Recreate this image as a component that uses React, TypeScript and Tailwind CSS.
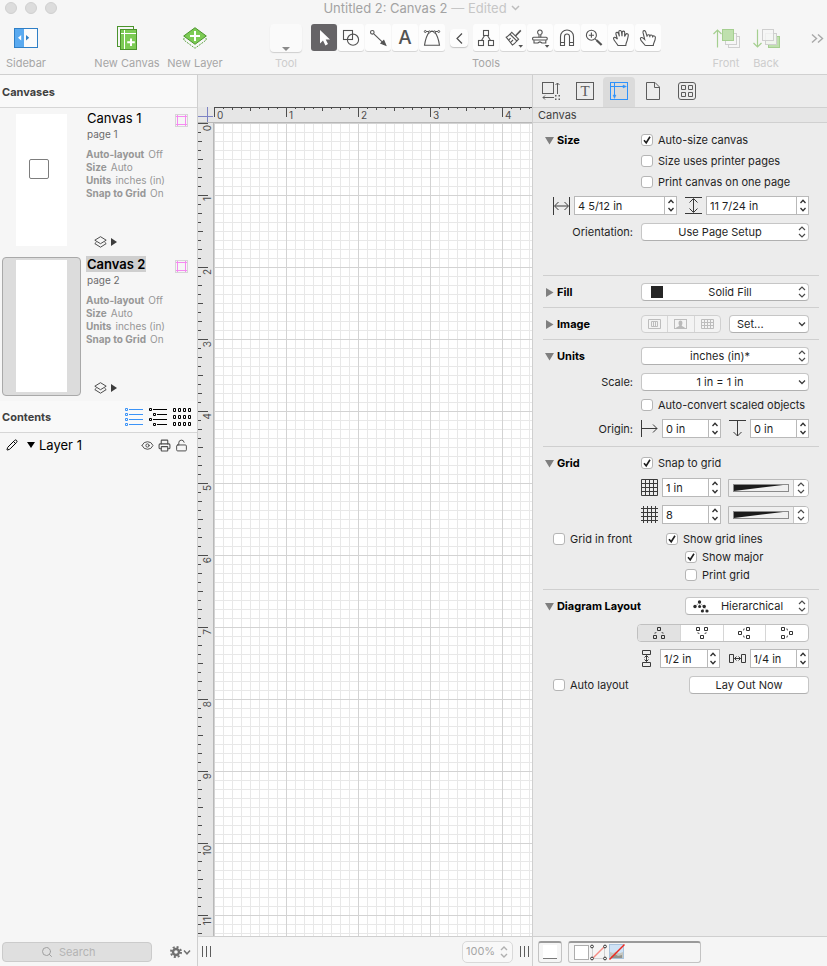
import { useEffect, useRef, useState, type ReactNode } from "react";
import { Search, Pencil, Eye, Printer, LockOpen } from "lucide-react";
import clsx from "clsx";

const INCH = 72;
const STEP = 9;

// Rulers only draw the ticks and numbers that fit in the visible length
function useSize() {
  const ref = useRef<HTMLDivElement>(null);
  const [size, setSize] = useState({ width: 0, height: 0 });

  useEffect(() => {
    const el = ref.current;
    if (!el) return;
    const measure = () => setSize({ width: el.clientWidth, height: el.clientHeight });
    measure();
    const observer = new ResizeObserver(measure);
    observer.observe(el);
    return () => observer.disconnect();
  }, []);

  return { ref, ...size };
}

function range(n: number) {
  return Array.from({ length: Math.max(0, n) }, (_, i) => i);
}

function tickLength(i: number, major: number) {
  if (i % 8 === 0) return major;
  if (i % 4 === 0) return 4;
  if (i % 2 === 0) return 3;
  return 2;
}

function HorizontalRuler() {
  const { ref, width } = useSize();

  return (
    <div ref={ref} className="min-w-0 flex-1">
      <svg className="block h-full w-full" aria-label="Horizontal ruler">
        <rect x="0" y="0" width="100%" height="1" fill="#4d4d4d" />
        {range(Math.ceil(width / STEP)).map((i) => (
          <rect key={i} x={i * STEP} y="0" width="1" height={tickLength(i, 10)} fill="#4d4d4d" />
        ))}
        {range(Math.ceil((width - 16) / INCH)).map((i) => (
          <text key={i} x={i * INCH + 3} y="12" fontSize="10" fill="#4d4d4d">
            {i}
          </text>
        ))}
      </svg>
    </div>
  );
}

function VerticalRuler() {
  const { ref, height } = useSize();

  return (
    <div ref={ref} className="w-4 shrink-0 border-r border-[#b8b8b8] bg-[#e6e6e6]">
      <svg className="block h-full w-full" aria-label="Vertical ruler">
        {range(Math.ceil(height / STEP)).map((i) => (
          <rect key={i} x="0" y={i * STEP} width={tickLength(i, 9) + 1} height="1" fill="#4d4d4d" />
        ))}
        {range(Math.ceil((height - 16) / INCH)).map((i) => (
          <text
            key={i}
            transform={`translate(13 ${i * INCH + 2}) rotate(-90)`}
            textAnchor="end"
            fontSize="10"
            fill="#4d4d4d"
          >
            {i}
          </text>
        ))}
      </svg>
    </div>
  );
}

function CanvasGrid() {
  return (
    <svg className="block h-full w-full bg-white" aria-label="Canvas 2 drawing area">
      <defs>
        <pattern id="minor" width={STEP} height={STEP} patternUnits="userSpaceOnUse">
          <path d="M0 0h9v1h-8v8h-1z" fill="#e8e8e8" />
        </pattern>
        <pattern id="major" width={INCH} height={INCH} patternUnits="userSpaceOnUse">
          <path d="M0 0h72v1h-71v71h-1z" fill="#d3d3d3" />
        </pattern>
      </defs>
      <rect width="100%" height="100%" fill="url(#minor)" />
      <rect width="100%" height="100%" fill="url(#major)" />
    </svg>
  );
}

/* ---------- Toolbar ---------- */

function ToolIcon({ children }: { children: ReactNode }) {
  return (
    <svg viewBox="0 0 26 27" className="h-[27px] w-[26px]" fill="none" stroke="#535353" strokeWidth="1.1">
      {children}
    </svg>
  );
}

const TOOLS_LEFT: { name: string; icon: ReactNode }[] = [
  {
    name: "Selection",
    icon: (
      <ToolIcon>
        <path d="M9 6V19.5L12 16.6L14.4 21.4L17 20.1L14.7 15.5H19Z" fill="#fff" stroke="none" />
      </ToolIcon>
    ),
  },
  {
    name: "Shape",
    icon: (
      <ToolIcon>
        <rect x="5.5" y="6.5" width="9" height="9" />
        <circle cx="15" cy="15.7" r="5.6" />
      </ToolIcon>
    ),
  },
  {
    name: "Line",
    icon: (
      <ToolIcon>
        <circle cx="7.3" cy="8.3" r="1.8" />
        <path d="M8.8 9.8L18 18.6" />
        <path d="M20.8 21.2L18.8 16.4L15.9 19.3Z" fill="#535353" />
      </ToolIcon>
    ),
  },
  {
    name: "Text",
    icon: <span className="text-[19px] leading-[27px] font-medium text-[#535353]">A</span>,
  },
  {
    name: "Pen",
    icon: (
      <ToolIcon>
        <path d="M6 7.5H20M10.2 8.2C8 11 6.3 16 5.5 21.3H20.5C19.7 16 18 11 15.8 8.2" />
        <path d="M10 8.5C11.5 6.5 14.5 6.5 16 8.5" />
        <g fill="#fff" strokeWidth="1">
          <circle cx="6.3" cy="7.5" r="1" />
          <circle cx="19.7" cy="7.5" r="1" />
          <circle cx="10.4" cy="7.9" r="1" />
          <circle cx="15.6" cy="7.9" r="1" />
        </g>
      </ToolIcon>
    ),
  },
];

const TOOLS_RIGHT: { name: string; icon: ReactNode }[] = [
  {
    name: "Diagram",
    icon: (
      <ToolIcon>
        <rect x="10.5" y="6.5" width="5" height="5" />
        <rect x="5.5" y="16.5" width="5" height="5" />
        <rect x="15.5" y="16.5" width="5" height="5" />
        <path d="M11.5 11.5L8.5 16.5M14.5 11.5L17.5 16.5" />
      </ToolIcon>
    ),
  },
  {
    name: "Style Brush",
    icon: (
      <ToolIcon>
        <path d="M11.8 8.4L18.6 15.2L16.8 17L10 10.2Z" />
        <path d="M10 10.2C8.8 11.6 7.6 12.6 6.2 13.2L12.4 21C14 20 15.6 18.6 16.8 17" />
        <path d="M8.6 16.2L10.6 14.2M10.4 18.6L13 16" />
        <path d="M15.4 12L20.8 6.4" strokeWidth="1.6" />
        <path d="M18.4 21H23L20.7 23.8Z" fill="#535353" stroke="none" />
      </ToolIcon>
    ),
  },
  {
    name: "Rubber Stamp",
    icon: (
      <ToolIcon>
        <path d="M12 13.2V10.4A2.3 2.3 0 1 1 13.8 10.4V13.2" />
        <rect x="5.6" y="13.2" width="14.6" height="2.8" rx="1" />
        <path d="M7 16.2V19H10.5C11.4 19 11.8 17.9 12.9 17.9S14.4 19 15.3 19H18.8V16.2" />
        <path d="M17.8 21H22.4L20.1 23.8Z" fill="#535353" stroke="none" />
      </ToolIcon>
    ),
  },
  {
    name: "Magnet",
    icon: (
      <ToolIcon>
        <path d="M6.5 21.5V12.5A6.5 6.5 0 0 1 19.5 12.5V21.5H15.5V12.5A2.5 2.5 0 0 0 10.5 12.5V21.5Z" />
        <path d="M6.5 18.5H10.5M15.5 18.5H19.5" />
      </ToolIcon>
    ),
  },
  {
    name: "Zoom",
    icon: (
      <ToolIcon>
        <circle cx="10.4" cy="11.2" r="5" />
        <path d="M10.4 8.6V13.8M7.8 11.2H13" />
        <path d="M14.2 15L16 16.6" />
        <path d="M15.6 16.2L20.6 21" strokeWidth="2.2" />
      </ToolIcon>
    ),
  },
  {
    name: "Hand",
    icon: (
      <ToolIcon>
        <path d="M10 21.5C9.2 19.6 5.5 16.4 5.5 14.4C5.5 13.1 7.2 13 8.2 14L9.4 15.2L7.9 10C7.5 8.2 9.8 7.7 10.4 9.3L11.4 12.4L10.8 8C10.7 6.2 13.2 6 13.5 7.8L14 12.2L14.2 8.2C14.4 6.6 16.8 6.8 16.7 8.6L16.6 12.6L17.7 10.4C18.4 9 20.6 9.7 20.3 11.4C19.9 13.6 19.6 15 19.2 16.4C18.7 18.2 17.8 19.4 17.8 21.5Z" />
      </ToolIcon>
    ),
  },
  {
    name: "Browse",
    icon: (
      <ToolIcon>
        <path d="M10.2 21.5C9.2 19.4 5.4 17 5.4 14.7C5.4 13.3 7.1 13.1 8.1 14.1L9.7 15.5L8 8.4C7.7 6.4 10.1 5.9 10.7 7.8L12 12.2V12.8M12 12.2C12.2 10.4 14.4 10.3 14.8 11.8V13.2M14.8 12C15.2 10.6 17.3 10.8 17.6 12.3V13.6M17.6 12.6C18.2 11.4 20.4 11.8 20.4 13.5C20.4 17.2 18.3 18.6 18.3 21.5H10.2" />
      </ToolIcon>
    ),
  },
];

function ToolButton({ name, active, onClick, children }: {
  name: string;
  active: boolean;
  onClick: () => void;
  children: ReactNode;
}) {
  return (
    <button
      aria-label={name}
      onClick={onClick}
      className={clsx(
        "flex h-[27px] w-[26px] items-center justify-center rounded-[3px]",
        active ? "bg-[#666467]" : "bg-[#fdfdfd] shadow-[0_1px_0_#d6d6d6]"
      )}
    >
      {children}
    </button>
  );
}

function ToolbarItem({ label, className, children }: { label: string; className: string; children: ReactNode }) {
  return (
    <button className={clsx("flex flex-col items-center whitespace-nowrap", className)}>
      <span className="flex h-7 items-center justify-center">{children}</span>
      <span className="mt-1 text-[11px] leading-[14px]">{label}</span>
    </button>
  );
}

function Toolbar() {
  const [tool, setTool] = useState("Selection");

  return (
    <header className="border-b border-[#d0d0d0] bg-[#f6f6f6] pb-1">
      <div className="flex h-4 items-center">
        <div className="flex gap-2 pl-[5px]">
          {["Close", "Minimize", "Zoom window"].map((n) => (
            <button key={n} aria-label={n} className="size-3 rounded-full border border-[#d0d0d0] bg-[#dcdcdc]" />
          ))}
        </div>
        <h1 className="flex flex-1 items-center justify-center gap-1 pr-[41px] text-[13px] leading-4 text-[#a3a3a3]">
          Untitled 2: Canvas 2 <span className="text-[#c6c6c6]">— Edited</span>
          <svg viewBox="0 0 9 6" className="h-[6px] w-[9px]" fill="none" stroke="#bdbdbd" strokeWidth="1.5">
            <path d="M1 1L4.5 4.5L8 1" />
          </svg>
        </h1>
      </div>

      <div className="flex items-start pt-2 text-[#a6a6a6]">
        <ToolbarItem label="Sidebar" className="mr-[41px] w-[52px]">
          <svg viewBox="0 0 24 20" className="h-5 w-6">
            <rect x="0.5" y="0.5" width="23" height="19" fill="#fbfbfb" stroke="#2f7fc6" />
            <rect x="1" y="1" width="9" height="18" fill="#5aaaf0" />
            <path d="M7.2 7V12.5L4 9.8Z" fill="#fff" />
            <path d="M12 7V12.5L15.2 9.8Z" fill="#2f7fc6" />
          </svg>
        </ToolbarItem>
        <ToolbarItem label="New Canvas" className="w-[68px]">
          <svg viewBox="0 0 20 24" className="h-6 w-5">
            <rect x="0.5" y="0.5" width="16" height="20" fill="#f6f6f6" stroke="#4b942c" />
            <rect x="3.5" y="3.5" width="16" height="20" fill="#7ccb54" stroke="#4b942c" />
            <path d="M7.5 4V23M4 7.5H19" stroke="#fff" />
            <path d="M14 12.5V20M10.2 16.2H17.8" stroke="#fff" strokeWidth="2" />
          </svg>
        </ToolbarItem>
        <ToolbarItem label="New Layer" className="w-[68px]">
          <svg viewBox="0 0 24 22" className="h-[22px] w-6">
            <path d="M1 11L0.8 13L12 21.3L23.2 13L23 11" fill="#f6f6f6" stroke="#5fa544" strokeDasharray="2 1" />
            <path d="M12 0.7L23.3 9L12 17.3L0.7 9Z" fill="#7ccb54" stroke="#4b942c" />
            <path d="M12 4V14M7 9H17" stroke="#fff" strokeWidth="2" />
          </svg>
        </ToolbarItem>

        <button className="ml-[41px] flex w-8 flex-col items-center">
          <span className="flex h-7 w-8 items-end justify-center rounded-[4px] bg-[#fafafa] shadow-[0_1px_1px_#cfcfcf]">
            <svg viewBox="0 0 8 4" className="mb-px h-1 w-2">
              <path d="M0 0H8L4 4Z" fill="#8a8a8a" />
            </svg>
          </span>
          <span className="mt-1 text-[11px] leading-[14px] text-[#cdcdcd]">Tool</span>
        </button>

        <div className="ml-[9px] flex flex-col items-center">
          <div className="flex h-7 gap-px">
            {TOOLS_LEFT.map((t) => (
              <ToolButton key={t.name} name={t.name} active={tool === t.name} onClick={() => setTool(t.name)}>
                {t.icon}
              </ToolButton>
            ))}
            <button
              aria-label="Collapse tools"
              className="mx-1 mt-[5px] flex h-[18px] w-[18px] items-center justify-center rounded-[4px] bg-[#fdfdfd] shadow-[0_1px_1px_#c4c4c4]"
            >
              <svg viewBox="0 0 7 11" className="h-[11px] w-[7px]" fill="none" stroke="#4d4d4d" strokeWidth="1.2">
                <path d="M6 0.5L1 5.5L6 10.5" />
              </svg>
            </button>
            {TOOLS_RIGHT.map((t) => (
              <ToolButton key={t.name} name={t.name} active={tool === t.name} onClick={() => setTool(t.name)}>
                {t.icon}
              </ToolButton>
            ))}
          </div>
          <span className="mt-1 text-[11px] leading-[14px]">Tools</span>
        </div>

        <div className="ml-auto flex text-[#cdcdcd]">
          <ToolbarItem label="Front" className="w-10">
            <svg viewBox="0 0 27 19" className="h-[19px] w-[27px]" fill="none">
              <path d="M4.5 18.5V1M0.5 5L4.5 1L8.5 5" stroke="#a5cf90" strokeWidth="1.2" />
              <rect x="15.5" y="7.5" width="11" height="11" fill="#f6f6f6" stroke="#cfcfcf" />
              <rect x="12.5" y="4.5" width="11" height="11" fill="#f6f6f6" stroke="#cfcfcf" />
              <rect x="9.5" y="0.5" width="11" height="11" fill="#bfe0ae" stroke="#a5cf90" />
            </svg>
          </ToolbarItem>
          <ToolbarItem label="Back" className="w-10">
            <svg viewBox="0 0 27 19" className="h-[19px] w-[27px]" fill="none">
              <path d="M4.5 0.5V18M0.5 14L4.5 18L8.5 14" stroke="#a5cf90" strokeWidth="1.2" />
              <rect x="15.5" y="7.5" width="11" height="11" fill="#bfe0ae" stroke="#a5cf90" />
              <rect x="12.5" y="4.5" width="11" height="11" fill="#f0f5ee" stroke="#cfcfcf" />
              <rect x="9.5" y="0.5" width="11" height="11" fill="#f6f6f6" fillOpacity="0.8" stroke="#cfcfcf" />
            </svg>
          </ToolbarItem>
        </div>
        <button aria-label="More toolbar items" className="mr-[3px] ml-[25px] flex h-7 items-center">
          <svg viewBox="0 0 13 9" className="h-[9px] w-[13px]" fill="none" stroke="#a8a8a8" strokeWidth="1.4">
            <path d="M1 0.5L5.5 4.5L1 8.5M7 0.5L11.5 4.5L7 8.5" />
          </svg>
        </button>
      </div>
    </header>
  );
}

/* ---------- Sidebar ---------- */

interface CanvasInfo {
  name: string;
  page: string;
  hasShape: boolean;
}

const CANVASES: CanvasInfo[] = [
  { name: "Canvas 1", page: "page 1", hasShape: true },
  { name: "Canvas 2", page: "page 2", hasShape: false },
];

const CANVAS_DETAILS = [
  ["Auto-layout", "Off"],
  ["Size", "Auto"],
  ["Units", "inches (in)"],
  ["Snap to Grid", "On"],
];

function CanvasItem({ canvas, selected, onSelect }: {
  canvas: CanvasInfo;
  selected: boolean;
  onSelect: () => void;
}) {
  return (
    <li className="flex pr-[9px] pl-[2px]">
      <button
        aria-label={canvas.name}
        onClick={onSelect}
        className={clsx(
          "mt-px flex h-[139px] w-[79px] items-start justify-center rounded-[4px] border pt-[2px]",
          selected ? "border-[#a9a9a9] bg-[#dcdcdc]" : "border-transparent"
        )}
      >
        <span className="flex h-[132px] w-[51px] bg-white pt-[45px] pl-[13px]">
          {canvas.hasShape && <span className="size-5 rounded-[2px] border border-[#7d7d7d]" />}
        </span>
      </button>
      <div className="flex flex-1 flex-col pl-[5px]">
        <div className="flex items-start justify-between">
          <h3 className={clsx("px-px text-[13px] leading-4 text-black", selected && "bg-[#cfcfcf] font-semibold")}>
            {canvas.name}
          </h3>
          <svg viewBox="0 0 13 13" className="mt-1 size-[13px]" fill="none">
            <rect x="0.5" y="0.5" width="12" height="12" stroke="#d6d6d6" />
            <path d="M2.5 1V12M10.5 1V12M1 2.5H12M1 10.5H12" stroke="#f58af0" />
          </svg>
        </div>
        <p className="px-px text-[10px] leading-[15px] text-[#6b6b6b]">{canvas.page}</p>
        <dl className="mt-[6px] text-[10px] leading-[13px] text-[#979797]">
          {CANVAS_DETAILS.map(([label, value]) => (
            <div key={label} className="flex gap-1 whitespace-nowrap">
              <dt className="font-bold">{label}</dt>
              <dd>{value}</dd>
            </div>
          ))}
        </dl>
        <button aria-label={`Layers of ${canvas.name}`} className="mt-auto mb-[2px] flex items-center gap-1 pl-2">
          <svg viewBox="0 0 13 12" className="h-3 w-[13px]" fill="none" stroke="#4d4d4d">
            <path d="M6.5 0.7L12.2 4.2L6.5 7.7L0.8 4.2Z" />
            <path d="M2.4 6.2L0.8 7.6L6.5 11.2L12.2 7.6L10.6 6.2" />
          </svg>
          <svg viewBox="0 0 6 8" className="h-2 w-[6px]">
            <path d="M0 0V8L6 4Z" fill="#3d3d3d" />
          </svg>
        </button>
      </div>
    </li>
  );
}

function Sidebar() {
  const [selected, setSelected] = useState("Canvas 2");

  return (
    <aside className="flex w-[198px] shrink-0 flex-col border-r border-[#cfcfcf] bg-[#f6f6f6]">
      <h2 className="h-[33px] border-b border-[#d6d6d6] bg-[#f9f9f9] pl-[2px] text-[11px] leading-[34px] font-bold text-[#3f3f3f]">
        Canvases
      </h2>
      <ul className="flex flex-col gap-[6px] pt-[2px] pb-[5px]">
        {CANVASES.map((c) => (
          <CanvasItem
            key={c.name}
            canvas={c}
            selected={selected === c.name}
            onSelect={() => setSelected(c.name)}
          />
        ))}
      </ul>

      <div className="flex h-8 items-center justify-between border-b border-[#d6d6d6] bg-[#f9f9f9] pr-[6px] pl-[2px]">
        <h2 className="text-[11px] leading-8 font-bold text-[#3f3f3f]">Contents</h2>
        <div className="flex gap-[6px]">
          <button aria-label="Layers list">
            <svg viewBox="0 0 18 18" className="block size-[18px]" fill="none" stroke="#3b93f7">
              {[0, 5, 10, 15].map((y) => (
                <path key={y} d={`M0.5 ${y + 0.5}h2v2h-2zM4 ${y + 1.5}h14`} />
              ))}
            </svg>
          </button>
          <button aria-label="Outline list">
            <svg viewBox="0 0 18 18" className="block size-[18px]" fill="none" stroke="#000">
              <path d="M0.5 0.5h2v2h-2zM4 1.5h14M4.5 5.5h2v2h-2zM8 6.5h10M0.5 10.5h2v2h-2zM4 11.5h14M4.5 15.5h2v2h-2zM8 16.5h10" />
            </svg>
          </button>
          <button aria-label="Objects grid">
            <svg viewBox="0 0 18 18" className="block size-[18px]" fill="none" stroke="#000">
              {[0, 7, 14].map((y) => (
                <path key={y} d={`M0.5 ${y + 0.5}h2v3h-2zM5.5 ${y + 0.5}h2v3h-2zM10.5 ${y + 0.5}h2v3h-2zM15.5 ${y + 0.5}h2v3h-2z`} />
              ))}
            </svg>
          </button>
        </div>
      </div>

      <div className="flex h-6 items-center pr-[9px] pl-[6px] text-[13px] text-black">
        <Pencil size={12} strokeWidth={2} />
        <svg viewBox="0 0 8 6" className="mr-1 ml-[9px] h-[6px] w-2">
          <path d="M0 0H8L4 6Z" fill="#000" />
        </svg>
        <span className="leading-4">Layer 1</span>
        <div className="ml-auto flex gap-1 text-[#4d4d4d]">
          <button aria-label="Layer visible"><Eye size={13} strokeWidth={1.8} /></button>
          <button aria-label="Layer prints"><Printer size={13} strokeWidth={2} /></button>
          <button aria-label="Layer unlocked"><LockOpen size={13} strokeWidth={1.8} /></button>
        </div>
      </div>

      <div className="mt-auto flex items-center pr-[6px] pb-1 pl-[2px]">
        <label className="flex h-5 w-[150px] items-center gap-[6px] rounded-[4px] border border-[#cbcbcb] bg-[#dfdfdf] pl-[38px]">
          <Search size={12} strokeWidth={2} color="#a0a0a0" className="shrink-0" />
          <input
            type="text"
            aria-label="Search"
            placeholder="Search"
            className="w-full min-w-0 text-[11px] leading-4 outline-none placeholder:text-[#b4b4b4]"
          />
        </label>
        <button aria-label="Actions" className="ml-auto flex items-center gap-px">
          <svg viewBox="0 0 12 12" className="size-3" fill="none" stroke="#707070">
            <circle cx="6" cy="6" r="3" strokeWidth="2.4" />
            <circle cx="6" cy="6" r="5" strokeWidth="2" strokeDasharray="2 1.93" />
          </svg>
          <svg viewBox="0 0 8 5" className="h-[5px] w-2" fill="none" stroke="#707070" strokeWidth="1.5">
            <path d="M1 0.5L4 3.8L7 0.5" />
          </svg>
        </button>
      </div>
    </aside>
  );
}

/* ---------- Canvas ---------- */

function Grip() {
  return (
    <span className="flex gap-[3px]">
      <span className="h-[11px] w-px bg-[#5c5c5c]" />
      <span className="h-[11px] w-px bg-[#5c5c5c]" />
      <span className="h-[11px] w-px bg-[#5c5c5c]" />
    </span>
  );
}

function CanvasArea() {
  return (
    <main className="flex min-w-0 flex-1 flex-col">
      <div className="h-8 shrink-0 bg-[#ebebeb]" />
      <div className="flex h-4 shrink-0 border-b border-[#b8b8b8] bg-[#e6e6e6]">
        <svg viewBox="0 0 16 15" className="h-[15px] w-4 shrink-0" fill="none" stroke="#7d83c4">
          <path d="M9.5 0V15M0 9.5H15" />
        </svg>
        <HorizontalRuler />
      </div>
      <div className="flex min-h-0 flex-1">
        <VerticalRuler />
        <div className="min-w-0 flex-1">
          <CanvasGrid />
        </div>
      </div>
      <footer className="flex h-[30px] shrink-0 items-center border-t border-[#cfcfcf] bg-[#f5f5f5] pr-[3px] pl-1">
        <Grip />
        <button className="mr-[7px] ml-auto flex h-[22px] w-[51px] items-center justify-between rounded-[5px] border border-[#d9d9d9] bg-[#f8f8f8] pr-1 pl-[3px] text-[11px] text-[#a6a6a6]">
          100%
          <svg viewBox="0 0 8 12" className="h-3 w-2" fill="none" stroke="#b0b0b0" strokeWidth="1.4">
            <path d="M1 4L4 1L7 4M1 8L4 11L7 8" />
          </svg>
        </button>
        <Grip />
      </footer>
    </main>
  );
}

/* ---------- Inspector controls ---------- */

function UpDown() {
  return (
    <svg viewBox="0 0 8 12" className="h-3 w-2" fill="none" stroke="#4a4a4a" strokeWidth="1.2">
      <path d="M1 4L4 1L7 4M1 8L4 11L7 8" />
    </svg>
  );
}

function Down() {
  return (
    <svg viewBox="0 0 8 12" className="h-3 w-2" fill="none" stroke="#3d3d3d" strokeWidth="1.3">
      <path d="M1 4.5L4 7.5L7 4.5" />
    </svg>
  );
}

function Popup({ label, value, pull, left, icon, className }: {
  label: string;
  value: string;
  pull?: boolean;
  left?: boolean;
  icon?: ReactNode;
  className?: string;
}) {
  return (
    <div className={clsx("relative h-[18px]", className ?? "flex-1")}>
      <select
        aria-label={label}
        className={clsx(
          "block h-[18px] w-full appearance-none rounded-[4px] border border-[#c6c6c6] border-b-[#b0b0b0] bg-white pr-[14px] text-[11px] leading-4 text-[#1f1f1f]",
          left ? "pl-[7px]" : "text-center",
          !left && (icon ? "pl-6" : "pl-1")
        )}
      >
        <option>{value}</option>
      </select>
      {icon && <span className="pointer-events-none absolute inset-y-0 left-2 flex items-center">{icon}</span>}
      <span className="pointer-events-none absolute inset-y-0 right-[3px] flex items-center">
        {pull ? <Down /> : <UpDown />}
      </span>
    </div>
  );
}

function Stepper({ label, initial, className }: { label: string; initial: string; className?: string }) {
  const [value, setValue] = useState(initial);

  return (
    <div className={clsx("flex h-[19px] min-w-0 border border-[#b9b9b9] bg-white", className ?? "flex-1")}>
      <input
        type="text"
        aria-label={label}
        value={value}
        onChange={(e) => setValue(e.target.value)}
        className="w-full min-w-0 flex-1 pl-[3px] text-[11px] leading-4 text-[#1f1f1f] outline-none"
      />
      <div className="flex w-[12px] shrink-0 flex-col border-l border-[#b9b9b9]">
        <button aria-label={`Increase ${label}`} className="flex flex-1 items-center justify-center">
          <svg viewBox="0 0 8 5" className="h-[5px] w-2" fill="none" stroke="#2f2f2f" strokeWidth="1.3">
            <path d="M1.5 4L4 1.2L6.5 4" />
          </svg>
        </button>
        <button aria-label={`Decrease ${label}`} className="flex flex-1 items-center justify-center">
          <svg viewBox="0 0 8 5" className="h-[5px] w-2" fill="none" stroke="#2f2f2f" strokeWidth="1.3">
            <path d="M1.5 1L4 3.8L6.5 1" />
          </svg>
        </button>
      </div>
    </div>
  );
}

function Check({ label, on = false, className }: { label: string; on?: boolean; className?: string }) {
  const [checked, setChecked] = useState(on);

  return (
    <label className={clsx("flex h-4 items-center gap-[5px] text-[11px] whitespace-nowrap text-[#1f1f1f]", className)}>
      <span className="relative flex size-3">
        <input
          type="checkbox"
          checked={checked}
          onChange={(e) => setChecked(e.target.checked)}
          className="size-3 appearance-none rounded-[3px] border border-[#b5b5b5] bg-white"
        />
        {checked && (
          <svg viewBox="0 0 12 12" className="pointer-events-none absolute inset-0 size-3" fill="none" stroke="#1f1f1f" strokeWidth="1.6">
            <path d="M3 6.2L5.2 8.8L9 2.8" />
          </svg>
        )}
      </span>
      {label}
    </label>
  );
}

function LineStyle({ label }: { label: string }) {
  return (
    <button
      aria-label={label}
      className="ml-[7px] flex h-[18px] w-[81px] items-stretch rounded-r-[4px] border border-[#b9b9b9] bg-[#efefef]"
    >
      <span className="flex flex-1 items-center justify-center">
        <svg viewBox="0 0 56 8" className="h-2 w-14">
          <rect x="0.5" y="0.5" width="55" height="7" fill="#efefef" stroke="#8a8a8a" />
          <path d="M1 1H50L1 7Z" fill="#1a1a1a" />
        </svg>
      </span>
      <span className="flex w-[15px] items-center justify-center rounded-r-[3px] border-l border-[#c6c6c6] bg-white">
        <UpDown />
      </span>
    </button>
  );
}

function Title({ open = true, children }: { open?: boolean; children: ReactNode }) {
  return (
    <h3 className="flex w-[98px] shrink-0 items-center pl-[2px] text-[11px] leading-4 font-bold whitespace-nowrap text-black">
      <svg viewBox="0 0 9 9" className="mr-[3px] size-[9px]">
        <path d={open ? "M0 1H9L4.5 8.5Z" : "M1 0V9L8.5 4.5Z"} fill="#7f7f7f" />
      </svg>
      {children}
    </h3>
  );
}

function Label({ children }: { children?: ReactNode }) {
  return (
    <span className="w-[98px] shrink-0 pr-2 text-right text-[11px] leading-4 text-[#1f1f1f]">{children}</span>
  );
}

function Section({ className, children }: { className: string; children: ReactNode }) {
  return (
    <section className={clsx("mr-2 ml-[10px] border-[#cfcfcf] pr-[10px] not-last:border-b", className)}>
      {children}
    </section>
  );
}

function Glyph({ children, className }: { children: ReactNode; className?: string }) {
  return (
    <svg viewBox="0 0 18 18" className={clsx("size-[18px] shrink-0", className)} fill="none" stroke="#3a3a3a">
      {children}
    </svg>
  );
}

const INSPECTOR_TABS: { name: string; icon: (color: string) => ReactNode }[] = [
  {
    name: "Object",
    icon: (c) => (
      <g stroke={c}>
        <rect x="0.5" y="0.5" width="11" height="11" />
        <path d="M15.5 1V12M13.5 3L15.5 1L17.5 3M1 15.5H12M3 13.5L1 15.5L3 17.5" />
        <path d="M13 13h2v2h-2zM16 13h2v2h-2zM13 16h2v2h-2zM16 16h2v2h-2z" fill={c} stroke="none" />
        <path d="M14 14h3v3h-3z" stroke="#ececec" />
      </g>
    ),
  },
  {
    name: "Type",
    icon: (c) => (
      <g>
        <rect x="0.5" y="0.5" width="17" height="17" stroke={c} />
        <text x="9" y="14" textAnchor="middle" fontSize="15" fill={c} className="font-['Liberation_Serif',serif]">
          T
        </text>
      </g>
    ),
  },
  {
    name: "Canvas",
    icon: (c) => (
      <g stroke={c}>
        <rect x="0.5" y="0.5" width="17" height="17" />
        <path d="M4.5 1V14M1 4.5H14" />
        <path d="M3 13H6L4.5 16.5ZM13 3V6L16.5 4.5Z" fill={c} strokeWidth="0.4" />
      </g>
    ),
  },
  {
    name: "Document",
    icon: (c) => (
      <g stroke={c}>
        <path d="M2.5 0.5H11L15.5 5V17.5H2.5Z" />
        <path d="M10.5 0.5V5.5H15.5" />
      </g>
    ),
  },
  {
    name: "Stencils",
    icon: (c) => (
      <g stroke={c}>
        <rect x="0.5" y="0.5" width="17" height="17" rx="2.5" />
        <path d="M3.5 3.5h4v4h-4zM10.5 3.5h4v4h-4zM3.5 10.5h4v4h-4zM10.5 10.5h4v4h-4z" />
      </g>
    ),
  },
];

const IMAGE_MODES: { name: string; icon: ReactNode }[] = [
  {
    name: "Natural size",
    icon: <path d="M0.5 0.5h12v9h-12zM3.5 2.5h6v5h-6zM5.5 3v4M7.5 3v4" />,
  },
  {
    name: "Stretch",
    icon: (
      <>
        <rect x="0.5" y="0.5" width="12" height="9" />
        <path d="M2 9.5C2.3 7.6 5.3 7.8 5.3 6.3C4 4.8 4.4 1.5 6.5 1.5S9 4.8 7.7 6.3C7.7 7.8 10.7 7.6 11 9.5Z" fill="#b9b9b9" stroke="none" />
      </>
    ),
  },
  {
    name: "Tile",
    icon: <path d="M0.5 0.5h12v9h-12zM0 3.5h13M0 6.5h13M3.5 0v10M6.5 0v10M9.5 0v10" />,
  },
];

const LAYOUT_DIRECTIONS = [
  { name: "Top to bottom", d: "M4.5 0.5h3v3h-3zM0.5 8.5h3v3h-3zM8.5 8.5h3v3h-3z", link: "M2 7V5.5H3.5M10 7V5.5H8.5" },
  { name: "Bottom to top", d: "M0.5 0.5h3v3h-3zM8.5 0.5h3v3h-3zM4.5 8.5h3v3h-3z", link: "M2 5V6.5H3.5M10 5V6.5H8.5" },
  { name: "Left to right", d: "M0.5 4.5h3v3h-3zM8.5 0.5h3v3h-3zM8.5 8.5h3v3h-3z", link: "M7 2H5.5V3.5M7 10H5.5V8.5" },
  { name: "Right to left", d: "M0.5 0.5h3v3h-3zM0.5 8.5h3v3h-3zM8.5 4.5h3v3h-3z", link: "M5 2H6.5V3.5M5 10H6.5V8.5" },
];

function Inspector() {
  const [tab, setTab] = useState("Canvas");
  const [direction, setDirection] = useState("Top to bottom");

  return (
    <aside className="flex w-[295px] shrink-0 flex-col border-l border-[#cfcfcf] bg-[#ececec]">
      <nav className="flex h-[33px] items-end gap-[2px] border-b border-[#d0d0d0] pl-[2px]">
        {INSPECTOR_TABS.map((t) => (
          <button
            key={t.name}
            aria-label={t.name}
            onClick={() => setTab(t.name)}
            className={clsx(
              "flex h-[30px] w-8 items-center justify-center rounded-t-[4px]",
              tab === t.name && "bg-[#dbdbdb]"
            )}
          >
            <svg viewBox="0 0 18 18" className="mb-[2px] size-[18px]" fill="none">
              {t.icon(tab === t.name ? "#2f92fb" : "#5c5c5c")}
            </svg>
          </button>
        ))}
      </nav>
      <h2 className="h-[15px] border-b border-[#d0d0d0] bg-[#e6e6e6] pl-[5px] text-[11px] leading-[14px] text-[#3f3f3f]">
        Canvas
      </h2>

      <div className="flex-1">
        <Section className="pt-[9px] pb-[34px]">
          <div className="flex items-center">
            <Title>Size</Title>
            <Check label="Auto-size canvas" on />
          </div>
          <Check label="Size uses printer pages" className="mt-[5px] ml-[98px]" />
          <Check label="Print canvas on one page" className="mt-[5px] ml-[98px]" />
          <div className="mt-[6px] flex items-center pl-[10px]">
            <Glyph className="mr-[3px]">
              <path d="M0.5 0V18M16.5 0V18M2 9H15M5.5 5L1.5 9L5.5 13M11.5 5L15.5 9L11.5 13" />
            </Glyph>
            <Stepper label="Canvas width" initial="4 5/12 in" />
            <Glyph className="mr-[3px] ml-2">
              <path d="M0 0.5H17M0 16.5H17M8.5 2V15M4.5 5.5L8.5 1.5L12.5 5.5M4.5 11.5L8.5 15.5L12.5 11.5" />
            </Glyph>
            <Stepper label="Canvas height" initial="11 7/24 in" />
          </div>
          <div className="mt-2 flex items-center">
            <Label>Orientation:</Label>
            <Popup label="Orientation" value="Use Page Setup" />
          </div>
        </Section>

        <Section className="pt-[7px] pb-[6px]">
          <div className="flex items-center">
            <Title open={false}>Fill</Title>
            <Popup
              label="Fill style"
              value="Solid Fill"
              icon={<span className="mx-[2px] size-3 bg-[#262626]" />}
            />
          </div>
        </Section>

        <Section className="pt-[7px] pb-[6px]">
          <div className="flex items-center">
            <Title open={false}>Image</Title>
            <div className="flex h-[18px] flex-1 divide-x divide-[#d6d6d6] rounded-[4px] border border-[#d0d0d0] bg-[#f3f3f3]">
              {IMAGE_MODES.map((m) => (
                <button key={m.name} disabled aria-label={m.name} className="flex flex-1 items-center justify-center">
                  <svg viewBox="0 0 13 10" className="h-[10px] w-[13px]" fill="none" stroke="#bdbdbd">
                    {m.icon}
                  </svg>
                </button>
              ))}
            </div>
            <Popup label="Set image" value="Set..." pull left className="ml-2 w-20" />
          </div>
        </Section>

        <Section className="pt-[7px] pb-2">
          <div className="flex items-center">
            <Title>Units</Title>
            <Popup label="Units" value="inches (in)*" />
          </div>
          <div className="mt-2 flex items-center">
            <Label>Scale:</Label>
            <Popup label="Scale" value="1 in = 1 in" pull />
          </div>
          <Check label="Auto-convert scaled objects" className="mt-[6px] ml-[98px]" />
          <div className="mt-[6px] flex items-center">
            <Label>Origin:</Label>
            <Glyph className="mr-[3px]">
              <path d="M0.5 0V17M1 8.5H16M12 4.5L16 8.5L12 12.5" />
            </Glyph>
            <Stepper label="Origin x" initial="0 in" />
            <Glyph className="mr-[3px] ml-2">
              <path d="M0 0.5H17M8.5 1V16M4.5 12L8.5 16L12.5 12" />
            </Glyph>
            <Stepper label="Origin y" initial="0 in" />
          </div>
        </Section>

        <Section className="pt-2 pb-[6px]">
          <div className="flex items-center">
            <Title>Grid</Title>
            <Check label="Snap to grid" on />
          </div>
          <div className="mt-[7px] flex items-center pl-[98px]">
            <Glyph className="mr-[3px]">
              <path d="M0.5 0.5h16v16h-16zM4.5 0v17M8.5 0v17M12.5 0v17M0 4.5h17M0 8.5h17M0 12.5h17" />
            </Glyph>
            <Stepper label="Major grid spacing" initial="1 in" />
            <LineStyle label="Major grid line style" />
          </div>
          <div className="mt-2 flex items-center pl-[98px]">
            <Glyph className="mr-[3px]">
              <path d="M2.5 0v17M6.5 0v17M10.5 0v17M14.5 0v17M0 2.5h17M0 6.5h17M0 10.5h17M0 14.5h17" />
            </Glyph>
            <Stepper label="Minor grid steps" initial="8" />
            <LineStyle label="Minor grid line style" />
          </div>
          <div className="mt-[7px] flex items-start pl-[10px]">
            <Check label="Grid in front" className="w-[113px]" />
            <div className="flex flex-col gap-[2px]">
              <Check label="Show grid lines" on />
              <Check label="Show major" on className="pl-[19px]" />
              <Check label="Print grid" className="pl-[19px]" />
            </div>
          </div>
        </Section>

        <Section className="pt-[7px] pb-2">
          <div className="flex items-center">
            <Title>Diagram Layout</Title>
            <Popup
              label="Layout type"
              value="Hierarchical"
              className="ml-auto w-[124px]"
              icon={
                <svg viewBox="0 0 16 13" className="h-[13px] w-4" fill="#2b2b2b" stroke="#2b2b2b">
                  <path d="M6.5 2.5L2 6.5M6.5 2.5L7 6.5M6.5 2.5L11 6.8M11 7L9.5 11M11 7L14 11" strokeWidth="0.6" strokeDasharray="1 1" />
                  <g stroke="none">
                    <circle cx="6.5" cy="2" r="1.7" />
                    <circle cx="2" cy="6.5" r="1.7" />
                    <circle cx="6.6" cy="6.5" r="1.5" />
                    <circle cx="11.2" cy="6.5" r="1.7" />
                    <circle cx="9.4" cy="11" r="1.6" />
                    <circle cx="14" cy="11" r="1.6" />
                  </g>
                </svg>
              }
            />
          </div>
          <div className="mt-[9px] ml-[94px] flex h-[18px] divide-x divide-[#d6d6d6] overflow-hidden rounded-[4px] border border-[#c0c0c0] bg-white">
            {LAYOUT_DIRECTIONS.map((l) => (
              <button
                key={l.name}
                aria-label={l.name}
                onClick={() => setDirection(l.name)}
                className={clsx("flex flex-1 items-center justify-center", direction === l.name && "bg-[#e2e2e2]")}
              >
                <svg viewBox="0 0 12 12" className="size-3" fill="none" stroke="#333">
                  <path d={l.d} />
                  <path d={l.link} stroke="#777" />
                </svg>
              </button>
            ))}
          </div>
          <div className="mt-[7px] flex items-center pl-[98px]">
            <Glyph className="mr-px">
              <path d="M1.5 0.5h8v4h-8zM1.5 12.5h8v4h-8zM5.5 5.5v6M3.5 7.5l2-2l2 2M3.5 9.5l2 2l2-2" />
            </Glyph>
            <Stepper label="Rank separation" initial="1/2 in" />
            <Glyph className="mr-[3px] ml-[9px]">
              <path d="M0.5 4.5h4v8h-4zM12.5 4.5h4v8h-4zM5.5 8.5h6M7.5 6.5l-2 2l2 2M9.5 6.5l2 2l-2 2" />
            </Glyph>
            <Stepper label="Object separation" initial="1/4 in" />
          </div>
          <div className="mt-2 flex items-center justify-between pl-[10px]">
            <Check label="Auto layout" />
            <button className="h-[18px] w-[120px] rounded-[4px] border border-[#c6c6c6] border-b-[#b0b0b0] bg-white text-[11px] leading-4 text-[#1f1f1f]">
              Lay Out Now
            </button>
          </div>
        </Section>
      </div>

      <footer className="flex h-[30px] items-center gap-[6px] border-t border-[#cfcfcf] bg-[#f5f5f5] pl-[5px]">
        <button
          aria-label="Canvas style"
          className="flex h-[22px] w-6 items-center justify-center rounded-[3px] border border-[#c3c3c3] border-t-2 border-t-[#9a9a9a]"
        >
          <span className="size-[14px] border-b border-[#7a7a7a] bg-white" />
        </button>
        <div className="flex h-[22px] w-[133px] items-center rounded-[3px] border border-[#c3c3c3] border-t-2 border-t-[#9a9a9a] pl-[5px]">
          <button aria-label="Fill style chit" className="size-[15px] border border-[#adadad] bg-white" />
          <button aria-label="Line style chit">
            <svg viewBox="0 0 19 17" className="h-[17px] w-[19px]" fill="none">
              <path d="M3.5 3V14M15.5 3V14M4 14.5H15" stroke="#d0d0d0" />
              <path d="M4 14L15.5 2.5" stroke="#f58c84" strokeWidth="1.5" />
              <g fill="#fff" stroke="#333">
                <circle cx="3" cy="2.5" r="1.4" />
                <circle cx="16" cy="2.5" r="1.4" />
                <circle cx="3" cy="14.5" r="1.4" />
                <circle cx="16" cy="14.5" r="1.4" />
              </g>
            </svg>
          </button>
          <button aria-label="Image chit" className="ml-px">
            <svg viewBox="0 0 16 16" className="size-4">
              <rect x="0.5" y="0.5" width="14" height="14" fill="#cfe2f5" stroke="#a9c3dc" />
              <path d="M1 8L4 9L7 7.5L10 9.5L14 8V14H1Z" fill="#c4c6c0" />
              <path d="M2 12.5L6 10L9 12L13 11V14H2Z" fill="#94948c" />
              <path d="M0.5 15.5L15.5 0.5" stroke="#f0281e" strokeWidth="1.4" />
            </svg>
          </button>
        </div>
      </footer>
    </aside>
  );
}

export default function App() {
  return (
    <div className="flex h-screen flex-col overflow-hidden bg-[#f6f6f6] font-[Inter,'Liberation_Sans',sans-serif]">
      <Toolbar />
      <div className="flex min-h-0 flex-1">
        <Sidebar />
        <CanvasArea />
        <Inspector />
      </div>
    </div>
  );
}
